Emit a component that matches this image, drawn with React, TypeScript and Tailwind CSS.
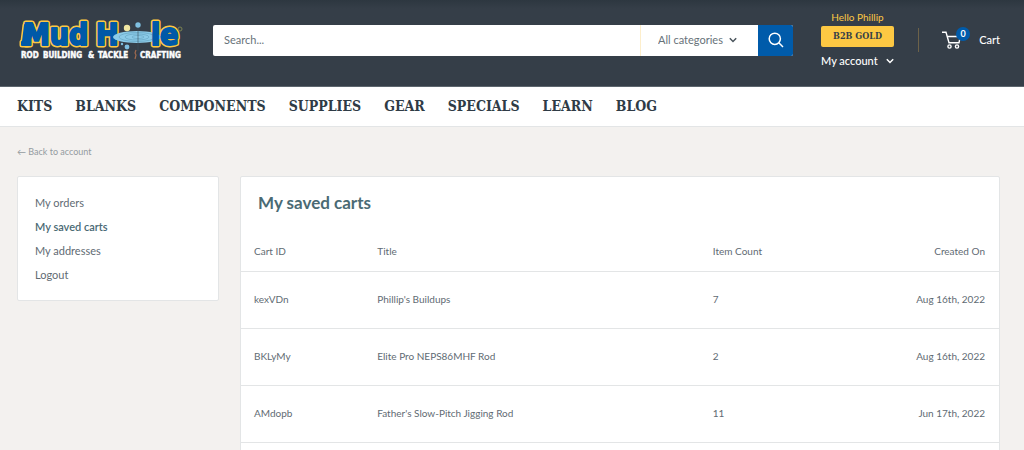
import React from 'react';

interface SavedCart {
  id: string;
  title: string;
  count: number;
  created: string;
}

const navItems = ['Kits', 'Blanks', 'Components', 'Supplies', 'Gear', 'Specials', 'Learn', 'Blog'];

const accountLinks = ['My orders', 'My saved carts', 'My addresses', 'Logout'];

const savedCarts: SavedCart[] = [
  { id: 'kexVDn', title: "Phillip's Buildups", count: 7, created: 'Aug 16th, 2022' },
  { id: 'BKLyMy', title: 'Elite Pro NEPS86MHF Rod', count: 2, created: 'Aug 16th, 2022' },
  { id: 'AMdopb', title: "Father's Slow-Pitch Jigging Rod", count: 11, created: 'Jun 17th, 2022' },
];

const Chevron: React.FC<{ className?: string }> = ({ className = '' }) => (
  <svg className={className} width="8" height="6" viewBox="0 0 8 6" fill="none" aria-hidden="true">
    <path d="M0.8 1.2 L4 4.5 L7.2 1.2" stroke="currentColor" strokeWidth="1.5" />
  </svg>
);

const Logo: React.FC = () => (
  <svg width="168" height="58" viewBox="0 -8 168 58" role="img" aria-label="Mud Hole">
    {/* Yellow outline sits under every letter */}
    <g
      className="font-['DejaVu_Sans_Condensed','DejaVu_Sans',sans-serif] text-[30px] font-bold"
      fill="#fdc843"
      stroke="#fdc843"
      strokeWidth="5"
      strokeLinejoin="round"
    >
      <path d="M8 6H16V12L11 26H5V23L6 22Z" />
      <text x="6" y="26">Mud</text>
      <text x="79" y="26">H</text>
      <text x="134" y="26">le</text>
    </g>
    <g
      className="font-['DejaVu_Sans_Condensed','DejaVu_Sans',sans-serif] text-[30px] font-bold"
      fill="#0059a8"
      stroke="#0059a8"
      strokeWidth="2"
      strokeLinejoin="round"
    >
      <path d="M8 6H16V12L11 26H5V23L6 22Z" />
      <text x="6" y="26">Mud</text>
      <text x="79" y="26">H</text>
    </g>
    {/* Water ripples stand in for the "o" */}
    <ellipse cx="120" cy="18" rx="24" ry="6" fill="#8ccbe8" />
    <g fill="none" stroke="#5f9fbe" strokeWidth="0.6">
      <ellipse cx="120" cy="18" rx="18" ry="4.5" />
      <ellipse cx="120" cy="18" rx="12" ry="3" />
      <ellipse cx="121" cy="18" rx="6" ry="1.5" />
    </g>
    <g
      className="font-['DejaVu_Sans_Condensed','DejaVu_Sans',sans-serif] text-[30px] font-bold"
      fill="#0059a8"
      stroke="#0059a8"
      strokeWidth="2"
      strokeLinejoin="round"
    >
      <text x="134" y="26">le</text>
    </g>
    <path d="M121 7V32" stroke="#3b505f" strokeWidth="0.6" />
    <circle cx="110" cy="9" r="3.2" fill="#efe6a2" />
    <circle cx="121" cy="6" r="2.7" fill="#7fbfe0" />
    <circle cx="110" cy="28" r="2.4" fill="#7fbfe0" />
    <circle cx="105" cy="25" r="1.2" fill="#7fbfe0" />
    <circle cx="163" cy="10" r="2" fill="none" stroke="#7c8452" strokeWidth="1" />
    <g
      className="font-['DejaVu_Sans_Condensed','DejaVu_Sans',sans-serif] text-[8px] font-bold"
      fill="#fff"
      stroke="#fff"
      strokeWidth="0.4"
    >
      <text x="4" y="39">ROD</text>
      <text x="26" y="39">BUILDING</text>
      <text x="71" y="39">&amp;</text>
      <text x="81" y="39">TACKLE</text>
      <text x="123" y="39">CRAFTING</text>
    </g>
    <path d="M119 31l-1 3 1 2-1 4" fill="none" stroke="#a06a50" strokeWidth="1.2" />
  </svg>
);

const Header: React.FC = () => (
  <header className="flex items-center border-b border-[#5d666e] bg-[#353e48] bg-linear-to-b from-[#2d3740] to-[#353e48] to-10% pt-[9px] pr-6 pb-[15px] pl-[17px] text-white">
    <a href="#" className="shrink-0">
      <Logo />
    </a>

    <form className="ml-7 flex h-[31px] flex-1 overflow-hidden rounded-[2px] bg-white" onSubmit={(e) => e.preventDefault()}>
      <input
        type="search"
        aria-label="Search"
        placeholder="Search..."
        className="min-w-0 flex-1 px-[11px] text-[11px] text-[#677279] outline-none placeholder:text-[#677279]"
      />
      <div className="relative flex w-[118px] items-center border-l border-[#fdeecb] text-[#677279]">
        <select
          aria-label="Category"
          className="h-full w-full appearance-none bg-transparent pl-[17px] text-[11px] outline-none"
        >
          <option>All categories</option>
        </select>
        <Chevron className="pointer-events-none absolute right-[21px] text-[#4a555d]" />
      </div>
      <button type="submit" aria-label="Search" className="flex w-[35px] items-center justify-center bg-[#005baa]">
        <svg width="16" height="16" viewBox="0 0 16 16" fill="none" stroke="currentColor" strokeWidth="1.5" aria-hidden="true">
          <circle cx="6.8" cy="6.8" r="5.6" />
          <path d="M10.8 10.8L15 15" />
        </svg>
      </button>
    </form>

    <div className="ml-7 flex w-[73px] flex-col items-center">
      <span className="text-[10px] leading-4 text-[#fdc843]">Hello Phillip</span>
      <span className="mt-px mb-1 flex h-[21px] w-full items-center justify-center rounded-[2px] bg-[#fdc843] font-['DejaVu_Serif_Condensed','DejaVu_Serif',serif] text-[9px] leading-none font-bold text-[#353e48]">
        B2B GOLD
      </span>
      <button type="button" className="flex w-full items-center justify-between text-[11px] leading-5 font-medium whitespace-nowrap">
        My account
        <Chevron />
      </button>
    </div>

    <span className="ml-6 h-6 w-px bg-[#6d6249]" />

    <a href="#" className="ml-[23px] flex w-[58px] items-center justify-between text-[11px] font-medium">
      <span className="relative">
        <svg width="20" height="18" viewBox="0 0 20 18" fill="none" stroke="currentColor" strokeWidth="1.4" aria-hidden="true">
          <path d="M0 1.2H4L7 11.8H17L18.2 5.5M5 5.5H17" />
          <circle cx="7.5" cy="15.5" r="1.6" />
          <circle cx="15" cy="15.5" r="1.6" />
        </svg>
        <span className="absolute -top-1 left-[14px] flex size-[14px] items-center justify-center rounded-full bg-[#005baa] text-[9px] font-bold">
          0
        </span>
      </span>
      Cart
    </a>
  </header>
);

const MainNav: React.FC = () => (
  <nav className="flex h-10 items-center gap-[23px] border-b border-[#e3e5e6] bg-white pr-6 pl-[17px]">
    {navItems.map((item) => (
      <a
        key={item}
        href="#"
        className="font-['DejaVu_Serif_Condensed','DejaVu_Serif',serif] text-[14px] font-bold text-[#2f3b46] uppercase"
      >
        {item}
      </a>
    ))}
  </nav>
);

const AccountMenu: React.FC = () => (
  <aside className="w-[202px] shrink-0 rounded-[2px] border border-[#e3e5e6] bg-white px-[17px] pt-[14px] pb-[13px]">
    <ul>
      {accountLinks.map((link) => (
        <li key={link} className="leading-6">
          <a href="#" className={link === 'My saved carts' ? 'font-semibold text-[#4a6a74]' : ''}>
            {link}
          </a>
        </li>
      ))}
    </ul>
  </aside>
);

const SavedCarts: React.FC = () => (
  <section className="flex-1 rounded-[2px] border border-[#e3e5e6] bg-white pb-10">
    <h1 className="px-[17px] pt-3 pb-4 text-[17px] leading-7 font-bold text-[#4a6a74]">My saved carts</h1>
    <table className="w-full table-fixed text-left text-[10px]">
      <thead>
        <tr className="h-[38px] border-b border-[#e3e5e6]">
          <th className="w-[16%] pl-[13px] font-normal">Cart ID</th>
          <th className="w-[44%] pl-[15px] font-normal">Title</th>
          <th className="w-[20%] pl-[17px] font-normal">Item Count</th>
          <th className="w-[20%] pr-[14px] text-right font-normal">Created On</th>
        </tr>
      </thead>
      <tbody>
        {savedCarts.map((cart) => (
          <tr key={cart.id} className="h-[57px] border-b border-[#e3e5e6]">
            <td className="pl-[13px]">{cart.id}</td>
            <td className="pl-[15px]">{cart.title}</td>
            <td className="pl-[17px]">{cart.count}</td>
            <td className="pr-[14px] text-right">{cart.created}</td>
          </tr>
        ))}
      </tbody>
    </table>
  </section>
);

const App: React.FC = () => (
  <div className="min-h-screen bg-[#f3f1ef] font-['Lato',sans-serif] text-[11px] text-[#5f6b73]">
    <Header />
    <MainNav />
    <main className="pt-4 pr-6 pb-10 pl-[17px]">
      <a href="#" className="text-[9px] leading-4 text-[#939b9f]">
        ← Back to account
      </a>
      <div className="mt-4 flex items-start gap-[21px]">
        <AccountMenu />
        <SavedCarts />
      </div>
    </main>
  </div>
);

export default App;
